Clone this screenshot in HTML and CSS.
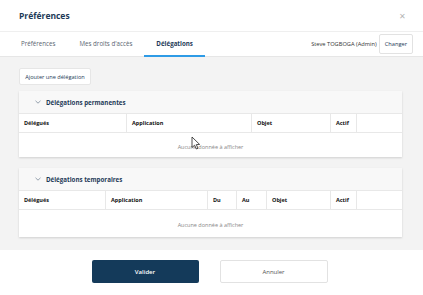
FILE: index.html
```html
<!DOCTYPE html>
<html lang="fr">
<head>
    <meta charset="UTF-8">
    <title>Préférences</title>
    <link rel="stylesheet" href="styles.css">
</head>
<body>
    <div class="modal">
        <div class="header">
            <h1>Préférences</h1>
            <span class="close">&#x2715;</span>
        </div>
        <div class="tabbar">
            <div class="tabs">
                <div class="tab">Préférences</div>
                <div class="tab">Mes droits d'accès</div>
                <div class="tab active">Délégations</div>
            </div>
            <div class="user">
                <span>Steve TOGBOGA (Admin)</span>
                <button class="btn-small">Changer</button>
            </div>
        </div>
        <div class="content">
            <button class="btn-add">Ajouter une délégation</button>

            <div class="panel">
                <div class="panel-head">
                    <svg class="chevron" width="6" height="4" viewBox="0 0 6 4"><path d="M0.5 0.8 L3 3.2 L5.5 0.8" fill="none" stroke="#8a97a5" stroke-width="0.9"/></svg>
                    <span>Délégations permanentes</span>
                </div>
                <div class="grid-head perm">
                    <div class="cell">Délégués</div>
                    <div class="cell">Application</div>
                    <div class="cell">Objet</div>
                    <div class="cell">Actif</div>
                    <div class="cell"></div>
                </div>
                <div class="empty">Aucune donnée à afficher</div>
            </div>

            <div class="panel">
                <div class="panel-head">
                    <svg class="chevron" width="6" height="4" viewBox="0 0 6 4"><path d="M0.5 0.8 L3 3.2 L5.5 0.8" fill="none" stroke="#8a97a5" stroke-width="0.9"/></svg>
                    <span>Délégations temporaires</span>
                </div>
                <div class="grid-head temp">
                    <div class="cell">Délégués</div>
                    <div class="cell">Application</div>
                    <div class="cell">Du</div>
                    <div class="cell">Au</div>
                    <div class="cell">Objet</div>
                    <div class="cell">Actif</div>
                    <div class="cell"></div>
                </div>
                <div class="empty tall">Aucune donnée à afficher</div>
            </div>
        </div>
        <div class="footer">
            <button class="btn-primary">Valider</button>
            <button class="btn-secondary">Annuler</button>
        </div>
    </div>
    <svg class="cursor" width="10" height="14" viewBox="0 0 10 14"><path d="M1 1 L1 11.5 L3.6 9.2 L5.4 13 L7 12.3 L5.3 8.6 L8.6 8.4 Z" fill="#fff" stroke="#222" stroke-width="0.8" stroke-linejoin="round"/></svg>
</body>
</html>
```

FILE: styles.css
```css
body {
    margin: 0;
    background-color: #ffffff;
    font-family: 'Open Sans', 'Noto Sans', sans-serif;
    color: #333;
}
.modal {
    width: 423px;
    height: 295px;
    display: flex;
    flex-direction: column;
}
.header {
    flex: 0 0 32px;
    box-sizing: border-box;
    display: flex;
    align-items: center;
    justify-content: space-between;
    padding: 0 17px 0 19px;
    border-bottom: 1px solid #efefef;
}
h1 {
    margin: 0;
    font-size: 8.5px;
    font-weight: 700;
    color: #1d3a57;
}
.close {
    font-size: 8px;
    color: #b5b5b5;
}
.tabbar {
    flex: 0 0 25px;
    box-sizing: border-box;
    display: flex;
    justify-content: space-between;
    align-items: stretch;
    padding: 0 10px 0 9px;
    border-bottom: 1px solid #e6e6e6;
}
.tabs {
    display: flex;
}
.tab {
    padding: 0 12px;
    font-size: 6.2px;
    color: #5a6570;
    display: flex;
    align-items: center;
    border-bottom: 2px solid transparent;
    margin-bottom: -1px;
}
.tab.active {
    font-weight: 700;
    color: #1d3a57;
    border-bottom-color: #2e9be6;
}
.user {
    display: flex;
    align-items: center;
    gap: 2px;
    font-size: 5.7px;
    color: #333;
}
.btn-small {
    height: 20px;
    padding: 0 5px;
    font-family: inherit;
    font-size: 5.7px;
    color: #1d3a57;
    background: #fff;
    border: 1px solid #e2e2e2;
    border-radius: 2px;
}
.content {
    flex: 0 0 193px;
    box-sizing: border-box;
    background-color: #f3f3f3;
    padding: 11px 21px 0 19px;
    display: flex;
    flex-direction: column;
    align-items: flex-start;
}
.btn-add {
    height: 17px;
    width: 72px;
    padding: 0;
    font-family: inherit;
    font-size: 5.6px;
    color: #1d3a57;
    background: #fff;
    border: 1px solid #e6e6e6;
    border-radius: 2px;
    margin-bottom: 6px;
}
.panel {
    width: 100%;
    background: #fff;
    box-shadow: 0 1px 2px rgba(0, 0, 0, 0.15);
    margin-bottom: 11px;
}
.panel-head {
    height: 22px;
    background: #f8f8f8;
    display: flex;
    align-items: center;
    padding-left: 16px;
    font-size: 6.2px;
    font-weight: 700;
    color: #1d3a57;
}
.chevron {
    margin-right: 5px;
}
.grid-head {
    display: grid;
    height: 20px;
    box-sizing: border-box;
    border-top: 1px solid #e8e8e8;
    border-bottom: 1px solid #e8e8e8;
}
.grid-head.perm {
    grid-template-columns: 108px 125px 79px 26px 1fr;
}
.grid-head.temp {
    grid-template-columns: 87px 102px 29px 30px 64px 26px 1fr;
}
.cell {
    display: flex;
    align-items: center;
    padding-left: 5px;
    font-size: 5.5px;
    font-weight: 700;
    color: #111;
    border-right: 1px solid #e8e8e8;
}
.cell:last-child {
    border-right: none;
}
.empty {
    height: 24px;
    display: flex;
    align-items: center;
    justify-content: center;
    font-size: 5.5px;
    color: #888;
    padding-top: 3px;
    box-sizing: border-box;
}
.empty.tall {
    height: 27px;
}
.footer {
    flex: 1;
    display: flex;
    justify-content: center;
    gap: 21px;
    padding: 10px 4px 0 0;
}
.btn-primary, .btn-secondary {
    width: 108px;
    height: 23px;
    font-family: inherit;
    font-size: 6px;
    border-radius: 2px;
}
.btn-primary {
    width: 107px;
    background: #143a5a;
    color: #fff;
    border: none;
    font-weight: 600;
}
.btn-secondary {
    background: #fff;
    color: #555;
    border: 1px solid #e2e2e2;
}
.cursor {
    position: absolute;
    left: 191px;
    top: 136px;
}
```
